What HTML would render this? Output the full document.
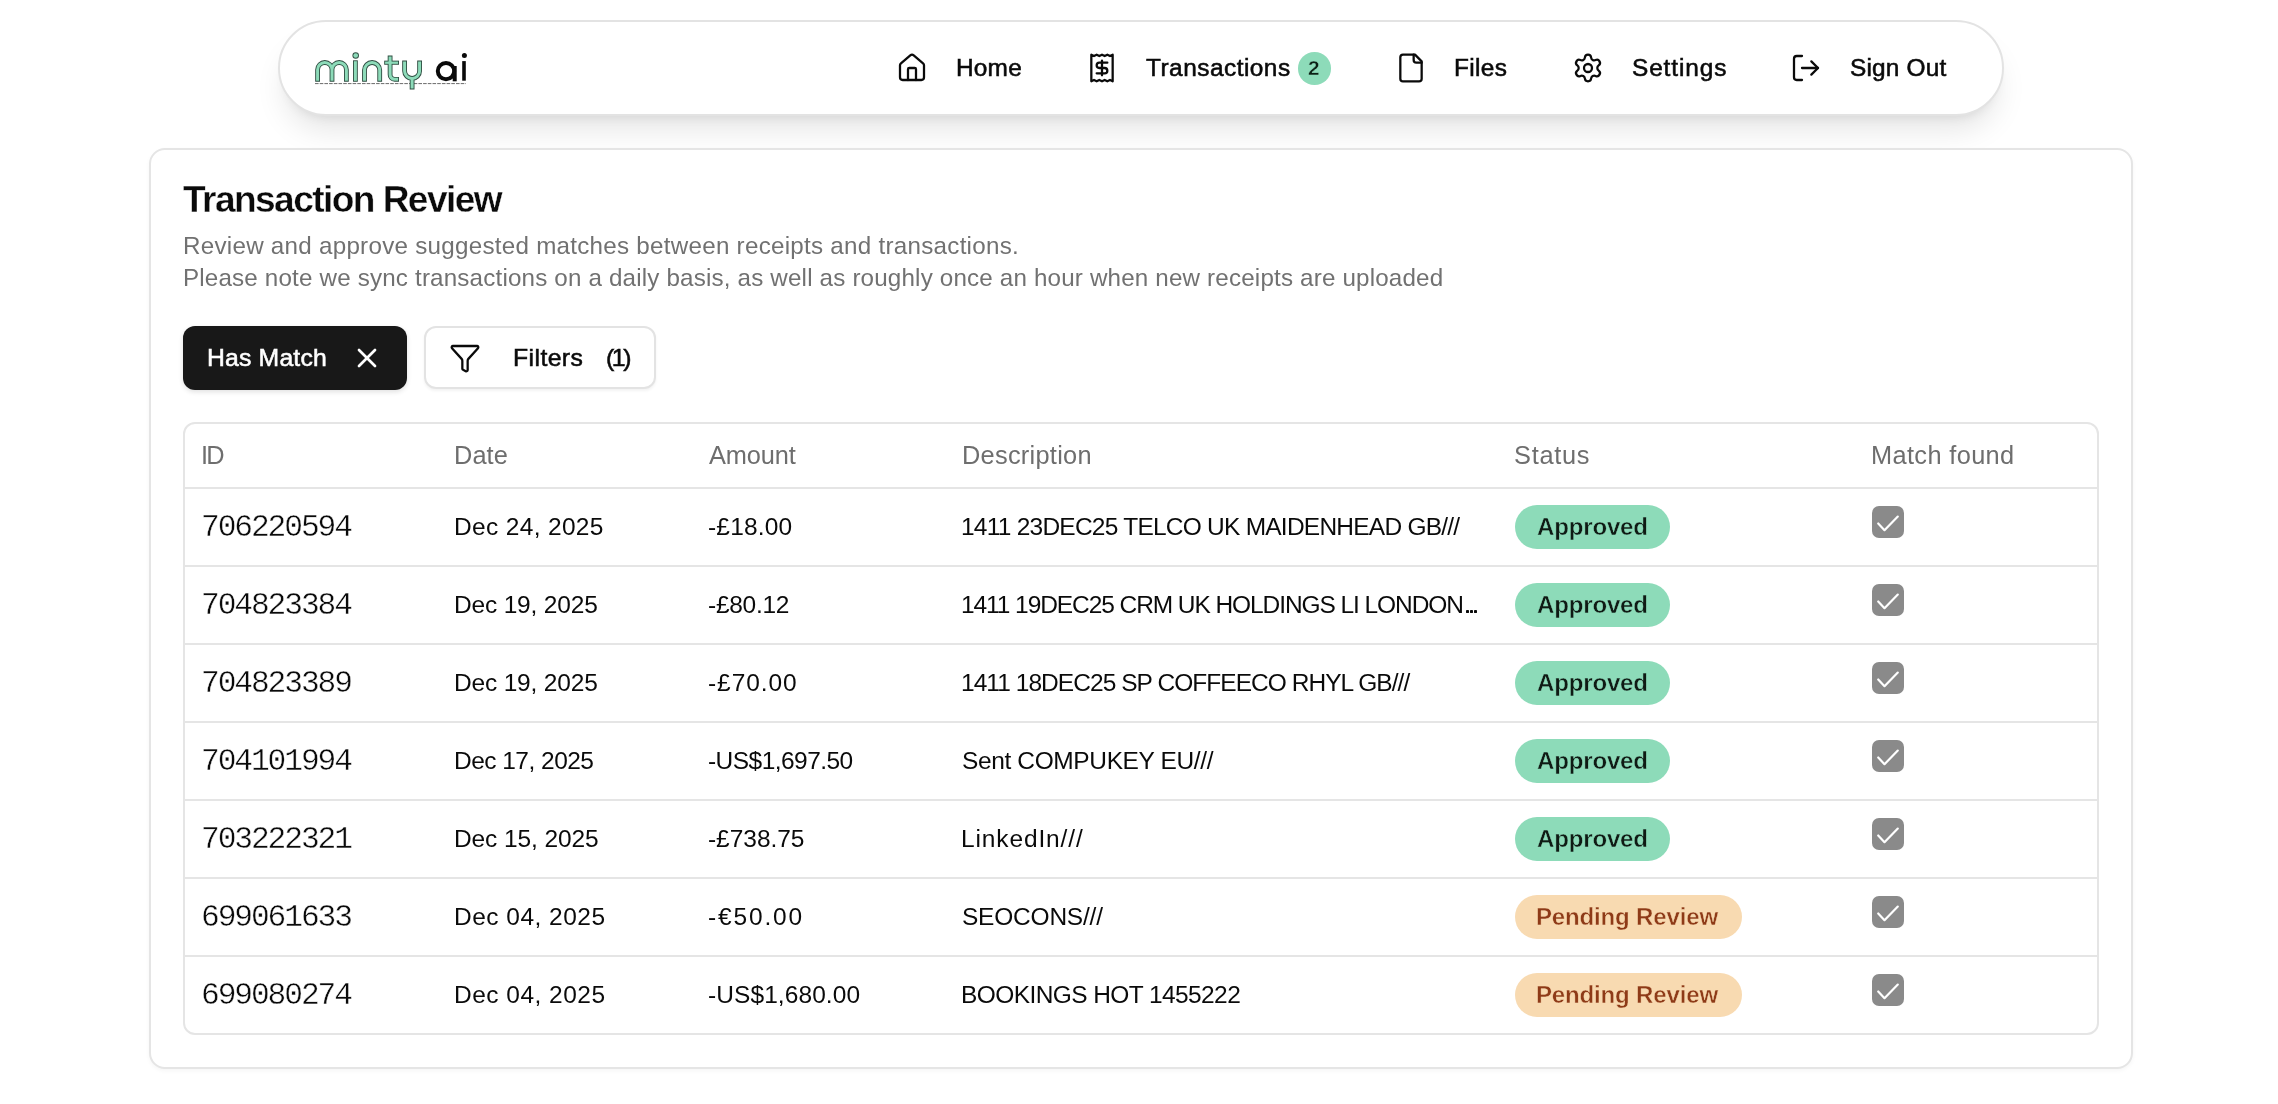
<!DOCTYPE html>
<html><head><meta charset="utf-8"><title>Transaction Review</title>
<style>
html,body{margin:0;padding:0;background:#fff;}
body{width:2278px;height:1104px;overflow:hidden;position:relative;font-family:"Liberation Sans",sans-serif;}
.t{position:absolute;white-space:nowrap;will-change:transform;}
.ic{position:absolute;overflow:visible;}
.box{position:absolute;box-sizing:border-box;}
</style></head><body>

<div class="box" style="left:278px;top:20px;width:1726px;height:96px;border:2px solid #e3e3e3;border-radius:48px;background:#fff;box-shadow:0 20px 30px -6px rgba(0,0,0,0.10),0 8px 12px -8px rgba(0,0,0,0.10)"></div>
<svg class="ic" style="left:0;top:0" width="500" height="100" viewBox="0 0 500 100"><line x1="315" y1="83.6" x2="466" y2="83.6" stroke="#6a6a6a" stroke-width="1" stroke-dasharray="3.6 1.1"/><path d="M317.6,81.75 V69.7 A7.2,7.2 0 0 1 332,69.7 V81.75 M332,69.7 A7.2,7.2 0 0 1 346.4,69.7 V81.75" fill="none" stroke="#2e4d41" stroke-width="4.8" stroke-linecap="butt"/><path d="M355.4,60.3 V81.75" fill="none" stroke="#2e4d41" stroke-width="4.8" stroke-linecap="butt"/><path d="M364.5,81.75 V70.1 A7.6,7.6 0 0 1 379.7,70.1 V81.75" fill="none" stroke="#2e4d41" stroke-width="4.8" stroke-linecap="butt"/><path d="M390.1,55.5 V74.5 A4.6,4.6 0 0 0 394.7,79.3 H399" fill="none" stroke="#2e4d41" stroke-width="4.8" stroke-linecap="butt"/><path d="M404.6,60.5 V71 A7.5,7.5 0 0 0 419.6,71 V60.5 M412.1,78.5 V89.5" fill="none" stroke="#2e4d41" stroke-width="4.8" stroke-linecap="butt"/><path d="M384.2,62.7 H399" stroke="#2e4d41" stroke-width="4.1"/><circle cx="355.7" cy="55.5" r="3.25" fill="#2e4d41"/><path d="M317.6,80.85 V69.7 A7.2,7.2 0 0 1 332,69.7 V80.85 M332,69.7 A7.2,7.2 0 0 1 346.4,69.7 V80.85" fill="none" stroke="#8ddbb9" stroke-width="3.0" stroke-linecap="butt"/><path d="M355.4,61.2 V80.85" fill="none" stroke="#8ddbb9" stroke-width="3.0" stroke-linecap="butt"/><path d="M364.5,80.85 V70.1 A7.6,7.6 0 0 1 379.7,70.1 V80.85" fill="none" stroke="#8ddbb9" stroke-width="3.0" stroke-linecap="butt"/><path d="M390.1,56.4 V74.5 A4.6,4.6 0 0 0 394.7,79.3 H398.1" fill="none" stroke="#8ddbb9" stroke-width="3.0" stroke-linecap="butt"/><path d="M404.6,61.4 V71 A7.5,7.5 0 0 0 419.6,71 V61.4 M412.1,78.5 V88.6" fill="none" stroke="#8ddbb9" stroke-width="3.0" stroke-linecap="butt"/><path d="M385.1,62.7 H398.1" stroke="#8ddbb9" stroke-width="2.3"/><circle cx="355.7" cy="55.5" r="2.35" fill="#8ddbb9"/><circle cx="446" cy="71.1" r="8.2" fill="none" stroke="#0a0a0a" stroke-width="4"/><path d="M454.7,66 V81.3" stroke="#0a0a0a" stroke-width="4"/><path d="M464,61.1 V80.7" stroke="#0a0a0a" stroke-width="3.6"/><circle cx="464.4" cy="55.6" r="2.5" fill="#0a0a0a"/></svg>
<svg class="ic" style="left:896px;top:51.8px" width="32" height="32" viewBox="0 0 24 24" fill="none" stroke="#0a0a0a" stroke-width="1.7" stroke-linecap="round" stroke-linejoin="round"><path d="M15 21v-8a1 1 0 0 0-1-1h-4a1 1 0 0 0-1 1v8"/><path d="M3 10a2 2 0 0 1 .709-1.528l7-5.999a2 2 0 0 1 2.582 0l7 5.999A2 2 0 0 1 21 10v9a2 2 0 0 1-2 2H5a2 2 0 0 1-2-2z"/></svg>
<div class="t" style="left:956.4px;top:51.9px;font-size:24.42px;line-height:31px;letter-spacing:0.2px;color:#0a0a0a;font-family:'Liberation Sans', sans-serif;font-weight:400;-webkit-text-stroke:0.55px #0a0a0a">Home</div>
<svg class="ic" style="left:1086px;top:51.8px" width="32" height="32" viewBox="0 0 24 24" fill="none" stroke="#0a0a0a" stroke-width="1.7" stroke-linecap="round" stroke-linejoin="round"><path d="M4 2v20l2-1 2 1 2-1 2 1 2-1 2 1 2-1 2 1V2l-2 1-2-1-2 1-2-1-2 1-2-1-2 1Z"/><path d="M16 8h-6a2 2 0 1 0 0 4h4a2 2 0 1 1 0 4H8"/><path d="M12 17.5v-11"/></svg>
<div class="t" style="left:1145.6px;top:52.0px;font-size:24.42px;line-height:31px;letter-spacing:0.482px;color:#0a0a0a;font-family:'Liberation Sans', sans-serif;font-weight:400;-webkit-text-stroke:0.55px #0a0a0a">Transactions</div>
<div class="box" style="left:1298.2px;top:52px;width:32.7px;height:32.7px;border-radius:50%;background:#8ddbb9"></div>
<div class="t" style="left:1308.1px;top:54.7px;font-size:20.86px;line-height:26px;letter-spacing:0px;color:#0b1f14;font-family:'Liberation Sans', sans-serif;font-weight:700;-webkit-text-stroke:0.4px #8ddbb9">2</div>
<svg class="ic" style="left:1395px;top:51.8px" width="32" height="32" viewBox="0 0 24 24" fill="none" stroke="#0a0a0a" stroke-width="1.7" stroke-linecap="round" stroke-linejoin="round"><path d="M15 2H6a2 2 0 0 0-2 2v16a2 2 0 0 0 2 2h12a2 2 0 0 0 2-2V7Z"/><path d="M14 2v4a2 2 0 0 0 2 2h4"/></svg>
<div class="t" style="left:1454.4px;top:52.0px;font-size:24.42px;line-height:31px;letter-spacing:0.325px;color:#0a0a0a;font-family:'Liberation Sans', sans-serif;font-weight:400;-webkit-text-stroke:0.55px #0a0a0a">Files</div>
<svg class="ic" style="left:1572px;top:51.6px" width="32" height="32" viewBox="0 0 24 24" fill="none" stroke="#0a0a0a" stroke-width="1.7" stroke-linecap="round" stroke-linejoin="round"><path d="M9.671 4.136a2.34 2.34 0 0 1 4.659 0 2.34 2.34 0 0 0 3.319 1.915 2.34 2.34 0 0 1 2.33 4.033 2.34 2.34 0 0 0 0 3.831 2.34 2.34 0 0 1-2.33 4.033 2.34 2.34 0 0 0-3.319 1.915 2.34 2.34 0 0 1-4.659 0 2.34 2.34 0 0 0-3.32-1.915 2.34 2.34 0 0 1-2.33-4.033 2.34 2.34 0 0 0 0-3.831A2.34 2.34 0 0 1 6.35 6.051a2.34 2.34 0 0 0 3.319-1.915"/><circle cx="12" cy="12" r="3"/></svg>
<div class="t" style="left:1631.7px;top:52.0px;font-size:24.42px;line-height:31px;letter-spacing:0.886px;color:#0a0a0a;font-family:'Liberation Sans', sans-serif;font-weight:400;-webkit-text-stroke:0.55px #0a0a0a">Settings</div>
<svg class="ic" style="left:1790px;top:51.9px" width="32" height="32" viewBox="0 0 24 24" fill="none" stroke="#0a0a0a" stroke-width="1.7" stroke-linecap="round" stroke-linejoin="round"><path d="m16 17 5-5-5-5"/><path d="M21 12H9"/><path d="M9 21H5a2 2 0 0 1-2-2V5a2 2 0 0 1 2-2h4"/></svg>
<div class="t" style="left:1850.0px;top:52.0px;font-size:24.42px;line-height:31px;letter-spacing:0.171px;color:#0a0a0a;font-family:'Liberation Sans', sans-serif;font-weight:400;-webkit-text-stroke:0.55px #0a0a0a">Sign Out</div>
<div class="box" style="left:149px;top:148px;width:1984px;height:921px;border:2px solid #e5e5e5;border-radius:16px;background:#fff;box-shadow:0 2px 4px rgba(0,0,0,0.04)"></div>
<div class="t" style="left:183.2px;top:175.8px;font-size:37.1px;line-height:46px;letter-spacing:-1.565px;color:#0a0a0a;font-family:'Liberation Sans', sans-serif;font-weight:700;-webkit-text-stroke:0.35px #fff">Transaction Review</div>
<div class="t" style="left:182.8px;top:230.85px;font-size:24.2px;line-height:30px;letter-spacing:0.261px;color:#717171;font-family:'Liberation Sans', sans-serif;font-weight:400">Review and approve suggested matches between receipts and transactions.</div>
<div class="t" style="left:182.8px;top:262.9px;font-size:24.2px;line-height:30px;letter-spacing:0.171px;color:#717171;font-family:'Liberation Sans', sans-serif;font-weight:400">Please note we sync transactions on a daily basis, as well as roughly once an hour when new receipts are uploaded</div>
<div class="box" style="left:183px;top:326px;width:224px;height:64px;border-radius:12px;background:#181818;box-shadow:0 2px 5px rgba(0,0,0,0.12)"></div>
<div class="t" style="left:206.9px;top:342.2px;font-size:24.78px;line-height:31px;letter-spacing:0.169px;color:#ffffff;font-family:'Liberation Sans', sans-serif;font-weight:400;-webkit-text-stroke:0.55px #ffffff">Has Match</div>
<svg class="ic" style="left:351px;top:342px" width="32" height="32" viewBox="0 0 24 24" fill="none" stroke="#ffffff" stroke-width="2" stroke-linecap="round" stroke-linejoin="round"><path d="M18 6 6 18"/><path d="m6 6 12 12"/></svg>
<div class="box" style="left:424px;top:326px;width:232px;height:63px;border:2px solid #e3e3e3;border-radius:12px;background:#fff;box-shadow:0 2px 3px rgba(0,0,0,0.05)"></div>
<svg class="ic" style="left:449px;top:341.7px" width="32" height="32" viewBox="0 0 24 24" fill="none" stroke="#0a0a0a" stroke-width="1.7" stroke-linecap="round" stroke-linejoin="round"><path d="M10 20a1 1 0 0 0 .553.895l2 1A1 1 0 0 0 14 21v-7a2 2 0 0 1 .517-1.341L21.74 4.67A1 1 0 0 0 21 3H3a1 1 0 0 0-.742 1.67l7.225 7.989A2 2 0 0 1 10 14z"/></svg>
<div class="t" style="left:512.8px;top:342.1px;font-size:24.78px;line-height:31px;letter-spacing:0.417px;color:#0a0a0a;font-family:'Liberation Sans', sans-serif;font-weight:400;-webkit-text-stroke:0.55px #0a0a0a">Filters</div>
<div class="t" style="left:606.0px;top:342.1px;font-size:24.78px;line-height:31px;letter-spacing:-2.4px;color:#0a0a0a;font-family:'Liberation Sans', sans-serif;font-weight:400;-webkit-text-stroke:0.55px #0a0a0a">(1)</div>
<div class="box" style="left:183px;top:422px;width:1916px;height:613px;border:2px solid #e5e5e5;border-radius:12px;background:#fff"></div>
<div class="t" style="left:201.0px;top:439.2px;font-size:25.36px;line-height:32px;letter-spacing:-1.9px;color:#6e6e6e;font-family:'Liberation Sans', sans-serif;font-weight:400">ID</div>
<div class="t" style="left:454.3px;top:439.2px;font-size:25.36px;line-height:32px;letter-spacing:0.1px;color:#6e6e6e;font-family:'Liberation Sans', sans-serif;font-weight:400">Date</div>
<div class="t" style="left:708.9px;top:439.2px;font-size:25.36px;line-height:32px;letter-spacing:-0.12px;color:#6e6e6e;font-family:'Liberation Sans', sans-serif;font-weight:400">Amount</div>
<div class="t" style="left:962.0px;top:439.2px;font-size:25.36px;line-height:32px;letter-spacing:0.27px;color:#6e6e6e;font-family:'Liberation Sans', sans-serif;font-weight:400">Description</div>
<div class="t" style="left:1513.8px;top:439.2px;font-size:25.36px;line-height:32px;letter-spacing:0.72px;color:#6e6e6e;font-family:'Liberation Sans', sans-serif;font-weight:400">Status</div>
<div class="t" style="left:1871.4px;top:439.2px;font-size:25.36px;line-height:32px;letter-spacing:0.36px;color:#6e6e6e;font-family:'Liberation Sans', sans-serif;font-weight:400">Match found</div>
<div class="box" style="left:185px;top:487px;width:1912px;height:2px;background:#e5e5e5"></div>
<div class="box" style="left:185px;top:565px;width:1912px;height:2px;background:#e5e5e5"></div>
<div class="box" style="left:185px;top:643px;width:1912px;height:2px;background:#e5e5e5"></div>
<div class="box" style="left:185px;top:721px;width:1912px;height:2px;background:#e5e5e5"></div>
<div class="box" style="left:185px;top:799px;width:1912px;height:2px;background:#e5e5e5"></div>
<div class="box" style="left:185px;top:877px;width:1912px;height:2px;background:#e5e5e5"></div>
<div class="box" style="left:185px;top:955px;width:1912px;height:2px;background:#e5e5e5"></div>
<div class="t" style="left:200.7px;top:507.5px;font-size:31.21px;line-height:39px;letter-spacing:-2.075px;color:#0a0a0a;font-family:'Liberation Mono', monospace;font-weight:400;-webkit-text-stroke:0.4px #fff">706220594</div>
<div class="t" style="left:454.0px;top:510.8px;font-size:24.49px;line-height:31px;letter-spacing:0.345px;color:#0a0a0a;font-family:'Liberation Sans', sans-serif;font-weight:400">Dec 24, 2025</div>
<div class="t" style="left:707.9px;top:510.8px;font-size:24.49px;line-height:31px;letter-spacing:0.183px;color:#0a0a0a;font-family:'Liberation Sans', sans-serif;font-weight:400">-£18.00</div>
<div class="t" style="left:961.0px;top:510.8px;font-size:24.49px;line-height:31px;letter-spacing:-0.754px;color:#0a0a0a;font-family:'Liberation Sans', sans-serif;font-weight:400">1411 23DEC25 TELCO UK MAIDENHEAD GB///</div>
<div class="box" style="left:1515px;top:505px;width:155px;height:44px;border-radius:22px;background:#8ddbb9"></div>
<div class="t" style="left:1537.0px;top:511.9px;font-size:24.06px;line-height:30px;letter-spacing:-0.177px;color:#0f1a14;font-family:'Liberation Sans', sans-serif;font-weight:700;-webkit-text-stroke:0.45px #8ddbb9">Approved</div>
<div class="box" style="left:1872px;top:506px;width:32px;height:32px;border-radius:7px;background:#8a8a8a"></div>
<svg class="ic" style="left:0;top:0px" width="2000" height="600" viewBox="0 0 2000 600"><path d="M1878.2,523.5 L1884.5,530.2 L1897.8,516.6" fill="none" stroke="#fff" stroke-width="2.2" stroke-linecap="round" stroke-linejoin="round"/></svg>
<div class="t" style="left:200.7px;top:585.5px;font-size:31.21px;line-height:39px;letter-spacing:-2.075px;color:#0a0a0a;font-family:'Liberation Mono', monospace;font-weight:400;-webkit-text-stroke:0.4px #fff">704823384</div>
<div class="t" style="left:454.0px;top:588.8px;font-size:24.49px;line-height:31px;letter-spacing:-0.173px;color:#0a0a0a;font-family:'Liberation Sans', sans-serif;font-weight:400">Dec 19, 2025</div>
<div class="t" style="left:707.9px;top:588.8px;font-size:24.49px;line-height:31px;letter-spacing:-0.267px;color:#0a0a0a;font-family:'Liberation Sans', sans-serif;font-weight:400">-£80.12</div>
<div class="t" style="left:961.0px;top:588.8px;font-size:24.49px;line-height:31px;letter-spacing:-1.068px;color:#0a0a0a;font-family:'Liberation Sans', sans-serif;font-weight:400">1411 19DEC25 CRM UK HOLDINGS LI LONDON</div>
<div class="box" style="left:1465.6px;top:609.6px;width:3.2px;height:3.2px;background:#0a0a0a;border-radius:0.4px"></div>
<div class="box" style="left:1469.8px;top:609.6px;width:3.2px;height:3.2px;background:#0a0a0a;border-radius:0.4px"></div>
<div class="box" style="left:1474.0px;top:609.6px;width:3.2px;height:3.2px;background:#0a0a0a;border-radius:0.4px"></div>
<div class="box" style="left:1515px;top:583px;width:155px;height:44px;border-radius:22px;background:#8ddbb9"></div>
<div class="t" style="left:1537.0px;top:589.9px;font-size:24.06px;line-height:30px;letter-spacing:-0.177px;color:#0f1a14;font-family:'Liberation Sans', sans-serif;font-weight:700;-webkit-text-stroke:0.45px #8ddbb9">Approved</div>
<div class="box" style="left:1872px;top:584px;width:32px;height:32px;border-radius:7px;background:#8a8a8a"></div>
<svg class="ic" style="left:0;top:78px" width="2000" height="600" viewBox="0 0 2000 600"><path d="M1878.2,523.5 L1884.5,530.2 L1897.8,516.6" fill="none" stroke="#fff" stroke-width="2.2" stroke-linecap="round" stroke-linejoin="round"/></svg>
<div class="t" style="left:200.7px;top:663.5px;font-size:31.21px;line-height:39px;letter-spacing:-2.075px;color:#0a0a0a;font-family:'Liberation Mono', monospace;font-weight:400;-webkit-text-stroke:0.4px #fff">704823389</div>
<div class="t" style="left:454.0px;top:666.8px;font-size:24.49px;line-height:31px;letter-spacing:-0.173px;color:#0a0a0a;font-family:'Liberation Sans', sans-serif;font-weight:400">Dec 19, 2025</div>
<div class="t" style="left:707.9px;top:666.8px;font-size:24.49px;line-height:31px;letter-spacing:0.933px;color:#0a0a0a;font-family:'Liberation Sans', sans-serif;font-weight:400">-£70.00</div>
<div class="t" style="left:961.0px;top:666.8px;font-size:24.49px;line-height:31px;letter-spacing:-0.941px;color:#0a0a0a;font-family:'Liberation Sans', sans-serif;font-weight:400">1411 18DEC25 SP COFFEECO RHYL GB///</div>
<div class="box" style="left:1515px;top:661px;width:155px;height:44px;border-radius:22px;background:#8ddbb9"></div>
<div class="t" style="left:1537.0px;top:667.9px;font-size:24.06px;line-height:30px;letter-spacing:-0.177px;color:#0f1a14;font-family:'Liberation Sans', sans-serif;font-weight:700;-webkit-text-stroke:0.45px #8ddbb9">Approved</div>
<div class="box" style="left:1872px;top:662px;width:32px;height:32px;border-radius:7px;background:#8a8a8a"></div>
<svg class="ic" style="left:0;top:156px" width="2000" height="600" viewBox="0 0 2000 600"><path d="M1878.2,523.5 L1884.5,530.2 L1897.8,516.6" fill="none" stroke="#fff" stroke-width="2.2" stroke-linecap="round" stroke-linejoin="round"/></svg>
<div class="t" style="left:200.7px;top:741.5px;font-size:31.21px;line-height:39px;letter-spacing:-2.075px;color:#0a0a0a;font-family:'Liberation Mono', monospace;font-weight:400;-webkit-text-stroke:0.4px #fff">704101994</div>
<div class="t" style="left:454.0px;top:744.8px;font-size:24.49px;line-height:31px;letter-spacing:-0.518px;color:#0a0a0a;font-family:'Liberation Sans', sans-serif;font-weight:400">Dec 17, 2025</div>
<div class="t" style="left:707.9px;top:744.8px;font-size:24.49px;line-height:31px;letter-spacing:-0.536px;color:#0a0a0a;font-family:'Liberation Sans', sans-serif;font-weight:400">-US$1,697.50</div>
<div class="t" style="left:962.0px;top:744.8px;font-size:24.49px;line-height:31px;letter-spacing:-0.367px;color:#0a0a0a;font-family:'Liberation Sans', sans-serif;font-weight:400">Sent COMPUKEY EU///</div>
<div class="box" style="left:1515px;top:739px;width:155px;height:44px;border-radius:22px;background:#8ddbb9"></div>
<div class="t" style="left:1537.0px;top:745.9px;font-size:24.06px;line-height:30px;letter-spacing:-0.177px;color:#0f1a14;font-family:'Liberation Sans', sans-serif;font-weight:700;-webkit-text-stroke:0.45px #8ddbb9">Approved</div>
<div class="box" style="left:1872px;top:740px;width:32px;height:32px;border-radius:7px;background:#8a8a8a"></div>
<svg class="ic" style="left:0;top:234px" width="2000" height="600" viewBox="0 0 2000 600"><path d="M1878.2,523.5 L1884.5,530.2 L1897.8,516.6" fill="none" stroke="#fff" stroke-width="2.2" stroke-linecap="round" stroke-linejoin="round"/></svg>
<div class="t" style="left:200.7px;top:819.5px;font-size:31.21px;line-height:39px;letter-spacing:-2.075px;color:#0a0a0a;font-family:'Liberation Mono', monospace;font-weight:400;-webkit-text-stroke:0.4px #fff">703222321</div>
<div class="t" style="left:454.0px;top:822.8px;font-size:24.49px;line-height:31px;letter-spacing:-0.091px;color:#0a0a0a;font-family:'Liberation Sans', sans-serif;font-weight:400">Dec 15, 2025</div>
<div class="t" style="left:707.9px;top:822.8px;font-size:24.49px;line-height:31px;letter-spacing:-0.029px;color:#0a0a0a;font-family:'Liberation Sans', sans-serif;font-weight:400">-£738.75</div>
<div class="t" style="left:961.0px;top:822.8px;font-size:24.49px;line-height:31px;letter-spacing:0.88px;color:#0a0a0a;font-family:'Liberation Sans', sans-serif;font-weight:400">LinkedIn///</div>
<div class="box" style="left:1515px;top:817px;width:155px;height:44px;border-radius:22px;background:#8ddbb9"></div>
<div class="t" style="left:1537.0px;top:823.9px;font-size:24.06px;line-height:30px;letter-spacing:-0.177px;color:#0f1a14;font-family:'Liberation Sans', sans-serif;font-weight:700;-webkit-text-stroke:0.45px #8ddbb9">Approved</div>
<div class="box" style="left:1872px;top:818px;width:32px;height:32px;border-radius:7px;background:#8a8a8a"></div>
<svg class="ic" style="left:0;top:312px" width="2000" height="600" viewBox="0 0 2000 600"><path d="M1878.2,523.5 L1884.5,530.2 L1897.8,516.6" fill="none" stroke="#fff" stroke-width="2.2" stroke-linecap="round" stroke-linejoin="round"/></svg>
<div class="t" style="left:200.7px;top:897.5px;font-size:31.21px;line-height:39px;letter-spacing:-2.075px;color:#0a0a0a;font-family:'Liberation Mono', monospace;font-weight:400;-webkit-text-stroke:0.4px #fff">699061633</div>
<div class="t" style="left:454.0px;top:900.8px;font-size:24.49px;line-height:31px;letter-spacing:0.491px;color:#0a0a0a;font-family:'Liberation Sans', sans-serif;font-weight:400">Dec 04, 2025</div>
<div class="t" style="left:707.9px;top:900.8px;font-size:24.49px;line-height:31px;letter-spacing:1.85px;color:#0a0a0a;font-family:'Liberation Sans', sans-serif;font-weight:400">-€50.00</div>
<div class="t" style="left:962.0px;top:900.8px;font-size:24.49px;line-height:31px;letter-spacing:-0.211px;color:#0a0a0a;font-family:'Liberation Sans', sans-serif;font-weight:400">SEOCONS///</div>
<div class="box" style="left:1515px;top:895px;width:227px;height:44px;border-radius:22px;background:#f8dab1"></div>
<div class="t" style="left:1536.0px;top:901.9px;font-size:24.06px;line-height:30px;letter-spacing:-0.177px;color:#8e3a17;font-family:'Liberation Sans', sans-serif;font-weight:700;-webkit-text-stroke:0.45px #f8dab1">Pending Review</div>
<div class="box" style="left:1872px;top:896px;width:32px;height:32px;border-radius:7px;background:#8a8a8a"></div>
<svg class="ic" style="left:0;top:390px" width="2000" height="600" viewBox="0 0 2000 600"><path d="M1878.2,523.5 L1884.5,530.2 L1897.8,516.6" fill="none" stroke="#fff" stroke-width="2.2" stroke-linecap="round" stroke-linejoin="round"/></svg>
<div class="t" style="left:200.7px;top:975.5px;font-size:31.21px;line-height:39px;letter-spacing:-2.075px;color:#0a0a0a;font-family:'Liberation Mono', monospace;font-weight:400;-webkit-text-stroke:0.4px #fff">699080274</div>
<div class="t" style="left:454.0px;top:978.8px;font-size:24.49px;line-height:31px;letter-spacing:0.491px;color:#0a0a0a;font-family:'Liberation Sans', sans-serif;font-weight:400">Dec 04, 2025</div>
<div class="t" style="left:707.9px;top:978.8px;font-size:24.49px;line-height:31px;letter-spacing:0.091px;color:#0a0a0a;font-family:'Liberation Sans', sans-serif;font-weight:400">-US$1,680.00</div>
<div class="t" style="left:961.0px;top:978.8px;font-size:24.49px;line-height:31px;letter-spacing:-0.579px;color:#0a0a0a;font-family:'Liberation Sans', sans-serif;font-weight:400">BOOKINGS HOT 1455222</div>
<div class="box" style="left:1515px;top:973px;width:227px;height:44px;border-radius:22px;background:#f8dab1"></div>
<div class="t" style="left:1536.0px;top:979.9px;font-size:24.06px;line-height:30px;letter-spacing:-0.177px;color:#8e3a17;font-family:'Liberation Sans', sans-serif;font-weight:700;-webkit-text-stroke:0.45px #f8dab1">Pending Review</div>
<div class="box" style="left:1872px;top:974px;width:32px;height:32px;border-radius:7px;background:#8a8a8a"></div>
<svg class="ic" style="left:0;top:468px" width="2000" height="600" viewBox="0 0 2000 600"><path d="M1878.2,523.5 L1884.5,530.2 L1897.8,516.6" fill="none" stroke="#fff" stroke-width="2.2" stroke-linecap="round" stroke-linejoin="round"/></svg>
</body></html>
